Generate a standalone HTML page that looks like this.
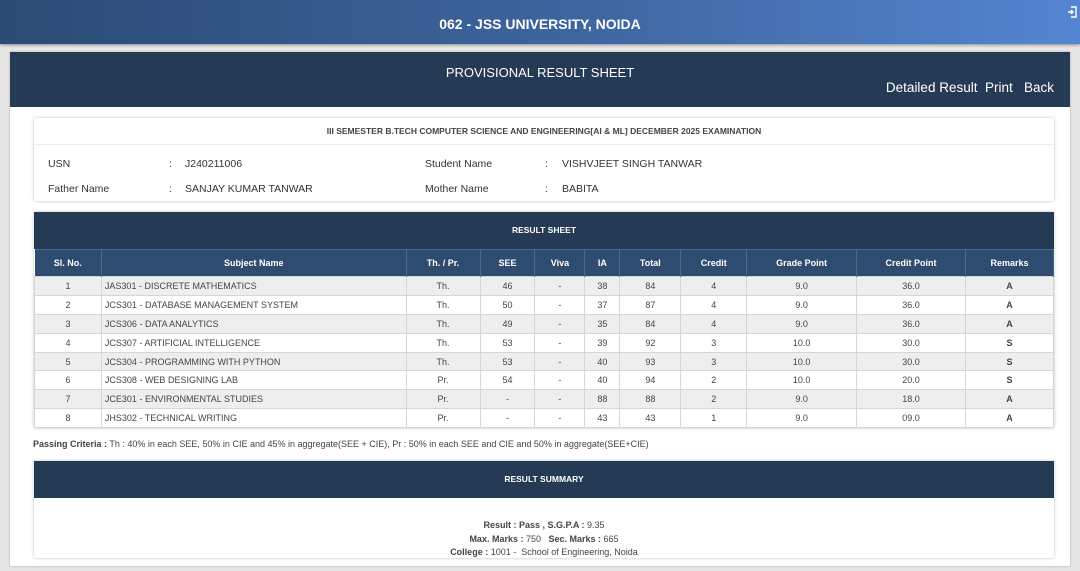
<!DOCTYPE html>
<html><head><meta charset="utf-8"><style>
*{box-sizing:border-box;margin:0;padding:0}
body{width:1080px;height:571px;overflow:hidden;background:#e6e6e6;font-family:"Liberation Sans",sans-serif;color:#333;position:relative}
.top{position:absolute;left:0;top:0;width:1080px;height:44px;background:linear-gradient(90deg,#2b4a74 0%,#3f66a0 55%,#5585d2 100%);color:#fff;font-weight:bold;font-size:14px;text-align:center;line-height:48px;box-shadow:0 1px 3px rgba(0,0,0,.4)}
.top .ic{position:absolute;right:3px;top:6px;width:10px;height:12px}
.panel{position:absolute;left:10px;top:52px;width:1060px;height:514px;background:#fff;box-shadow:0 0 2px rgba(0,0,0,.3)}
.band{height:55px;background:#243a55;color:#fff;position:relative}
.band .t{position:absolute;left:0;right:0;top:13px;text-align:center;font-size:13px}
.band .l{position:absolute;right:16px;top:28px;font-size:13.5px}
.card{position:absolute;left:24px;width:1020px;background:#fff;box-shadow:0 0 3px rgba(0,0,0,.25);border-radius:2px}
.info{top:66px;height:83px}
.info .h{height:27px;border-bottom:1px solid #eee;text-align:center;font-size:8.5px;font-weight:bold;line-height:27px;color:#444}
.info .r{position:absolute;font-size:10.5px;color:#333}
table{border-collapse:collapse;width:1020px;font-size:9px}
.res{top:160px}
.dh{background:#243a55;color:#fff;font-weight:bold;font-size:8.5px;text-align:center;height:37px;line-height:37px}
th{background:#2e4c6f;color:#fff;height:27px;font-size:9px;border-right:1px solid #4c6a8c;border-top:1px solid #4a6383}
td{height:18.9px;text-align:center;border:1px solid #d6d6d6;color:#444}
tbody tr:nth-child(odd) td{background:#eceef0}
td.s{text-align:left;padding-left:3px}
td.b{font-weight:bold}
.pc{position:absolute;left:23px;top:387px;font-size:9px;color:#444}
.sum{top:409px;height:97px}
.sum .c{text-align:center;font-size:9px;line-height:13.5px;margin-top:21px;color:#444}
</style></head><body>
<div class="top">062 - JSS UNIVERSITY, NOIDA
<svg class="ic" viewBox="0 0 10 12"><path d="M4 1H9V11H4M1 6H6M4 4L6 6L4 8" stroke="#fff" stroke-width="1.4" fill="none"/></svg></div>
<div class="panel">
<div class="band"><div class="t">PROVISIONAL RESULT SHEET</div><div class="l">Detailed Result&nbsp; Print&nbsp;&nbsp; Back</div></div>
<div class="card info"><div class="h">III SEMESTER B.TECH COMPUTER SCIENCE AND ENGINEERING[AI &amp; ML] DECEMBER 2025 EXAMINATION</div>
<div class="r" style="left:14px;top:40px">USN</div><div class="r" style="left:135px;top:40px">:</div><div class="r" style="left:151px;top:40px">J240211006</div>
<div class="r" style="left:391px;top:40px">Student Name</div><div class="r" style="left:511px;top:40px">:</div><div class="r" style="left:528px;top:40px">VISHVJEET SINGH TANWAR</div>
<div class="r" style="left:14px;top:65px">Father Name</div><div class="r" style="left:135px;top:65px">:</div><div class="r" style="left:151px;top:65px">SANJAY KUMAR TANWAR</div>
<div class="r" style="left:391px;top:65px">Mother Name</div><div class="r" style="left:511px;top:65px">:</div><div class="r" style="left:528px;top:65px">BABITA</div>
</div>
<div class="card res"><div class="dh">RESULT SHEET</div>
<table><colgroup><col style="width:67px"><col style="width:305px"><col style="width:74px"><col style="width:55px"><col style="width:50px"><col style="width:35px"><col style="width:61px"><col style="width:66px"><col style="width:110px"><col style="width:109px"><col style="width:88px"></colgroup>
<thead><tr><th>Sl. No.</th><th>Subject Name</th><th>Th. / Pr.</th><th>SEE</th><th>Viva</th><th>IA</th><th>Total</th><th>Credit</th><th>Grade Point</th><th>Credit Point</th><th>Remarks</th></tr></thead>
<tbody>
<tr><td>1</td><td class="s">JAS301 - DISCRETE MATHEMATICS</td><td>Th.</td><td>46</td><td>-</td><td>38</td><td>84</td><td>4</td><td>9.0</td><td>36.0</td><td class="b">A</td></tr>
<tr><td>2</td><td class="s">JCS301 - DATABASE MANAGEMENT SYSTEM</td><td>Th.</td><td>50</td><td>-</td><td>37</td><td>87</td><td>4</td><td>9.0</td><td>36.0</td><td class="b">A</td></tr>
<tr><td>3</td><td class="s">JCS306 - DATA ANALYTICS</td><td>Th.</td><td>49</td><td>-</td><td>35</td><td>84</td><td>4</td><td>9.0</td><td>36.0</td><td class="b">A</td></tr>
<tr><td>4</td><td class="s">JCS307 - ARTIFICIAL INTELLIGENCE</td><td>Th.</td><td>53</td><td>-</td><td>39</td><td>92</td><td>3</td><td>10.0</td><td>30.0</td><td class="b">S</td></tr>
<tr><td>5</td><td class="s">JCS304 - PROGRAMMING WITH PYTHON</td><td>Th.</td><td>53</td><td>-</td><td>40</td><td>93</td><td>3</td><td>10.0</td><td>30.0</td><td class="b">S</td></tr>
<tr><td>6</td><td class="s">JCS308 - WEB DESIGNING LAB</td><td>Pr.</td><td>54</td><td>-</td><td>40</td><td>94</td><td>2</td><td>10.0</td><td>20.0</td><td class="b">S</td></tr>
<tr><td>7</td><td class="s">JCE301 - ENVIRONMENTAL STUDIES</td><td>Pr.</td><td>-</td><td>-</td><td>88</td><td>88</td><td>2</td><td>9.0</td><td>18.0</td><td class="b">A</td></tr>
<tr><td>8</td><td class="s">JHS302 - TECHNICAL WRITING</td><td>Pr.</td><td>-</td><td>-</td><td>43</td><td>43</td><td>1</td><td>9.0</td><td>09.0</td><td class="b">A</td></tr>
</tbody></table></div>
<div class="pc"><b>Passing Criteria :</b> Th : 40% in each SEE, 50% in CIE and 45% in aggregate(SEE + CIE), Pr : 50% in each SEE and CIE and 50% in aggregate(SEE+CIE)</div>
<div class="card sum"><div class="dh">RESULT SUMMARY</div>
<div class="c"><b>Result : Pass , S.G.P.A :</b> 9.35<br><b>Max. Marks :</b> 750&nbsp;&nbsp; <b>Sec. Marks :</b> 665<br><b>College :</b> 1001 -&nbsp; School of Engineering, Noida</div></div>
</div>
</body></html>
